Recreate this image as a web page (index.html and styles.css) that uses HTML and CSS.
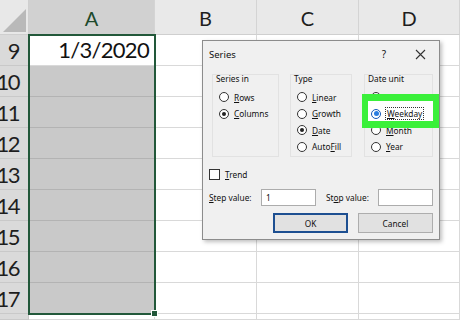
FILE: index.html
```html
<!DOCTYPE html>
<html lang="en">
<head>
    <meta charset="UTF-8">
    <meta name="viewport" content="width=device-width, initial-scale=1.0">
    <title>Series - Fill Weekdays</title>
    <link rel="stylesheet" href="styles.css">
</head>
<body>
    <div class="sheet">
        <div class="corner"></div>
        <div class="col-head is-sel">A</div>
        <div class="col-head">B</div>
        <div class="col-head">C</div>
        <div class="col-head">D</div>

        <div class="row-head">9</div>
        <div class="cell active">1/3/2020</div>
        <div class="cell"></div><div class="cell"></div><div class="cell"></div>

        <div class="row-head">10</div>
        <div class="cell sel"></div>
        <div class="cell"></div><div class="cell"></div><div class="cell"></div>

        <div class="row-head">11</div>
        <div class="cell sel"></div>
        <div class="cell"></div><div class="cell"></div><div class="cell"></div>

        <div class="row-head">12</div>
        <div class="cell sel"></div>
        <div class="cell"></div><div class="cell"></div><div class="cell"></div>

        <div class="row-head">13</div>
        <div class="cell sel"></div>
        <div class="cell"></div><div class="cell"></div><div class="cell"></div>

        <div class="row-head">14</div>
        <div class="cell sel"></div>
        <div class="cell"></div><div class="cell"></div><div class="cell"></div>

        <div class="row-head">15</div>
        <div class="cell sel"></div>
        <div class="cell"></div><div class="cell"></div><div class="cell"></div>

        <div class="row-head">16</div>
        <div class="cell sel"></div>
        <div class="cell"></div><div class="cell"></div><div class="cell"></div>

        <div class="row-head">17</div>
        <div class="cell sel"></div>
        <div class="cell"></div><div class="cell"></div><div class="cell"></div>

        <div class="row-head"></div>
        <div class="cell"></div>
        <div class="cell"></div><div class="cell"></div><div class="cell"></div>

        <!-- selected range A9:A17 -->
        <div class="selection"><span class="fill-handle"></span></div>

        <div class="dialog">
            <div class="dlg-title">
                <span class="dlg-name">Series</span>
                <span class="help">?</span>
                <svg class="close" width="11" height="11" viewBox="0 0 11 11">
                    <path d="M1 1 L10 10 M10 1 L1 10" stroke="#333" stroke-width="1.1" fill="none"/>
                </svg>
            </div>

            <div class="groups">
                <div class="group g-in">
                    <div class="group-label">Series in</div>
                    <div class="opt"><span class="radio"></span><span><u>R</u>ows</span></div>
                    <div class="opt"><span class="radio on"></span><span><u>C</u>olumns</span></div>
                </div>
                <div class="group g-type">
                    <div class="group-label">Type</div>
                    <div class="opt"><span class="radio"></span><span><u>L</u>inear</span></div>
                    <div class="opt"><span class="radio"></span><span><u>G</u>rowth</span></div>
                    <div class="opt"><span class="radio on"></span><span><u>D</u>ate</span></div>
                    <div class="opt"><span class="radio"></span><span>Auto<u>F</u>ill</span></div>
                </div>
                <div class="group g-unit">
                    <div class="group-label">Date unit</div>
                    <div class="opt"><span class="radio"></span><span>D<u>a</u>y</span></div>
                    <div class="opt focus"><span class="radio on blue"></span><span class="focus-text"><u>W</u>eekday</span></div>
                    <div class="opt"><span class="radio"></span><span><u>M</u>onth</span></div>
                    <div class="opt"><span class="radio"></span><span><u>Y</u>ear</span></div>
                </div>
            </div>

            <div class="trend"><span class="check"></span><span><u>T</u>rend</span></div>

            <div class="values">
                <span class="val-label"><u>S</u>tep value:</span>
                <span class="input">1</span>
                <span class="val-label stop">St<u>o</u>p value:</span>
                <span class="input"></span>
            </div>

            <div class="buttons">
                <div class="btn default">OK</div>
                <div class="btn">Cancel</div>
            </div>
        </div>
    </div>
</body>
</html>
```

FILE: styles.css
```css
body {
    margin: 0;
    background: #fff;
    overflow: hidden;
}

.sheet {
    position: relative;
    width: 460px;
    height: 320px;
    display: grid;
    grid-template-columns: 29px 126px 102px 102px 1fr;
    grid-template-rows: 35px repeat(9, 31px) 1fr;
    font-family: Lato, "Liberation Sans", sans-serif;
    color: #1e1e1e;
    overflow: hidden;
}

.corner {
    position: relative;
    background: #e8e8e8;
    border-right: 1px solid #cfcfcf;
    border-bottom: 1px solid #cfcfcf;
}

.corner::after {
    content: "";
    position: absolute;
    left: 3px;
    right: 2px;
    top: 9px;
    bottom: 2px;
    background: #b9b9b9;
    clip-path: polygon(100% 0, 100% 100%, 0 100%);
}

.col-head {
    background: #e9e9e9;
    border-right: 1px solid #d4d4d4;
    border-bottom: 1px solid #cfcfcf;
    display: flex;
    align-items: center;
    justify-content: center;
    font-size: 20px;
    padding-top: 2px;
    box-sizing: border-box;
}

.col-head.is-sel {
    background: #d1d1d1;
    color: #1d4a2c;
}

.row-head {
    background: #dadada;
    border-right: 1px solid #c6c6c6;
    border-bottom: 1px solid #c9c9c9;
    display: flex;
    justify-content: flex-end;
    align-items: flex-end;
    padding: 0 9px 3px 0;
    font-size: 22px;
    letter-spacing: -1.5px;
    line-height: 1;
    overflow: hidden;
    box-sizing: border-box;
}

.cell {
    border-right: 1px solid #d9d9d9;
    border-bottom: 1px solid #d9d9d9;
    box-sizing: border-box;
}

.cell.sel {
    background: #c9c9c9;
    border-bottom-color: #b3b3b3;
}

.cell.active {
    display: flex;
    justify-content: flex-end;
    align-items: flex-end;
    padding: 0 5px 4px 0;
    font-size: 22px;
    letter-spacing: -0.7px;
    line-height: 1;
    color: #111;
}

.selection {
    position: absolute;
    left: 28px;
    top: 34px;
    width: 128px;
    height: 281px;
    border: 2px solid #22583a;
    box-sizing: border-box;
}

.fill-handle {
    position: absolute;
    right: -4px;
    bottom: -4px;
    width: 5px;
    height: 5px;
    background: #22583a;
    border: 1px solid #fff;
}

/* Series dialog */

.dialog {
    position: absolute;
    left: 202px;
    top: 40px;
    width: 238px;
    height: 200px;
    box-sizing: border-box;
    border: 1px solid #8c8c8c;
    background: #f0f0f0;
    box-shadow: 2px 2px 4px rgba(0, 0, 0, 0.25);
    font-family: "Noto Sans", "Open Sans", sans-serif;
    font-size: 8.3px;
    color: #111;
    display: flex;
    flex-direction: column;
}

.dialog u {
    text-underline-offset: 1px;
}

.dlg-title {
    height: 26px;
    display: flex;
    align-items: center;
    padding-left: 6px;
    font-size: 9.5px;
}

.dlg-name {
    flex: 1;
}

.help {
    font-size: 10px;
    margin-right: 29px;
}

.close {
    margin-right: 13px;
}

.groups {
    display: flex;
    gap: 11px;
    margin-top: 7px;
    padding-left: 9px;
}

.group {
    height: 83px;
    border: 1px solid #e2e2e2;
    box-sizing: border-box;
}

.g-in { width: 67px; }
.g-type { width: 62px; margin-right: 1px; }
.g-unit { width: 69px; }

.group-label {
    height: 14px;
    line-height: 8px;
    padding-left: 3px;
}

.opt {
    height: 16.5px;
    display: flex;
    align-items: center;
    gap: 5px;
    padding-left: 6px;
    white-space: nowrap;
}

.radio {
    width: 10px;
    height: 10px;
    box-sizing: border-box;
    border: 1px solid #333;
    border-radius: 50%;
    background: #fff;
    position: relative;
    flex: none;
}

.radio.on::after {
    content: "";
    position: absolute;
    left: 2px;
    top: 2px;
    width: 4px;
    height: 4px;
    border-radius: 50%;
    background: #222;
}

.radio.blue {
    border-color: #1458b8;
}

.radio.blue::after {
    background: #2a7de0;
    left: 1.5px;
    top: 1.5px;
    width: 5px;
    height: 5px;
}

.opt.focus {
    position: relative;
    z-index: 1;
}

.opt.focus::before {
    content: "";
    position: absolute;
    left: -3px;
    right: -7px;
    top: -12px;
    bottom: -6px;
    border: 7px solid #3af03a;
    border-left-width: 6px;
    border-right-width: 6px;
    background: #fff;
    z-index: -1;
}

.focus-text {
    outline: 1px dotted #333;
    padding: 0 1px;
}

.trend {
    display: flex;
    align-items: center;
    gap: 5px;
    height: 14px;
    margin-top: 10px;
    padding-left: 6px;
}

.check {
    width: 11px;
    height: 11px;
    box-sizing: border-box;
    border: 1px solid #333;
    background: #fff;
}

.values {
    display: flex;
    align-items: center;
    height: 17px;
    margin-top: 8px;
    padding-left: 6px;
}

.val-label {
    width: 52px;
}

.val-label.stop {
    margin-left: 10px;
}

.input {
    width: 55px;
    height: 17px;
    box-sizing: border-box;
    border: 1px solid #acacac;
    background: #fff;
    padding-left: 4px;
    line-height: 15px;
}

.buttons {
    display: flex;
    justify-content: flex-end;
    gap: 10px;
    margin-top: 7px;
    padding-right: 6px;
}

.btn {
    width: 75px;
    height: 20px;
    box-sizing: border-box;
    border: 1px solid #adadad;
    background: #e1e1e1;
    display: flex;
    align-items: center;
    justify-content: center;
}

.btn.default {
    border: 2px solid #1d4f91;
}
```
